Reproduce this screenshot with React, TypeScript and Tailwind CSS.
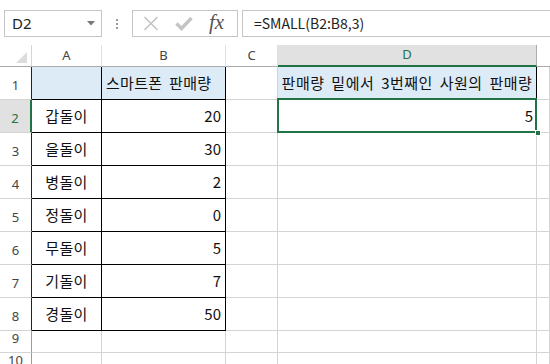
import React from "react";

const KR = "font-['Malgun_Gothic','Noto_Sans_CJK_KR',sans-serif]";
const UI = "font-['Segoe_UI','Noto_Sans',sans-serif]";

const people = [
  { name: "갑돌이", value: 20 },
  { name: "을돌이", value: 30 },
  { name: "병돌이", value: 2 },
  { name: "정돌이", value: 0 },
  { name: "무돌이", value: 5 },
  { name: "기돌이", value: 7 },
  { name: "경돌이", value: 50 },
];

function RowHeader({ n, active, inTable }: { n: number; active?: boolean; inTable?: boolean }) {
  return (
    <div
      className={`w-[32px] shrink-0 flex items-end justify-center pb-[4px] border-b border-[#d4d4d4] text-[13px] ${UI} ${
        active
          ? "bg-[#e1e1e1] text-[#217346] border-r-2 border-r-[#217346]"
          : inTable
          ? "bg-white text-[#444] border-r border-r-[#222]"
          : "bg-white text-[#444] border-r border-r-[#9b9b9b]"
      }`}
    >
      {n}
    </div>
  );
}

function FormulaBar() {
  return (
    <div className="h-[45px] flex items-start pt-[10px] bg-white">
      {/* name box */}
      <div className="ml-[4px] w-[98px] h-[27px] border border-[#c6c6c6] flex items-center justify-between pl-[7px] pr-[6px]">
        <span className={`text-[15px] text-[#222] ${UI}`}>D2</span>
        <svg width="8" height="5" viewBox="0 0 8 5">
          <path d="M0 0 L8 0 L4 4.5 Z" fill="#777" />
        </svg>
      </div>
      {/* grip dots */}
      <div className="w-[30px] h-[27px] flex flex-col items-center justify-center gap-[2px]">
        <div className="w-[2px] h-[2px] bg-[#9a9a9a]" />
        <div className="w-[2px] h-[2px] bg-[#9a9a9a]" />
        <div className="w-[2px] h-[2px] bg-[#9a9a9a]" />
      </div>
      {/* cancel / enter / fx */}
      <div className="w-[106px] h-[27px] border border-[#c6c6c6] flex items-center pl-[10px] gap-[16px]">
        <svg width="16" height="15" viewBox="0 0 16 15">
          <path d="M1.5 1 L14.5 14 M14.5 1 L1.5 14" stroke="#c4c4c4" strokeWidth="1.6" fill="none" />
        </svg>
        <svg width="18" height="15" viewBox="0 0 18 15">
          <path d="M1.5 7.5 L6.5 12.5 L16.5 2" stroke="#c4c4c4" strokeWidth="3.4" fill="none" />
        </svg>
        <span className="font-['Liberation_Serif',serif] italic text-[21px] leading-none text-[#555] -mt-[2px]">
          fx
        </span>
      </div>
      <div className="ml-[4px] flex-1 h-[27px] border border-r-0 border-[#c6c6c6] flex items-center pl-[11px]">
        <span className={`text-[14px] text-[#222] ${KR}`}>=SMALL(B2:B8,3)</span>
      </div>
    </div>
  );
}

function ColumnHeaders() {
  const cols = [
    { label: "A", w: "w-[70px]" },
    { label: "B", w: "w-[124px]" },
    { label: "C", w: "w-[52px]" },
  ];
  return (
    <div className={`h-[22px] flex text-[13px] ${UI}`}>
      <div className="w-[32px] shrink-0 border-r border-b border-r-[#d4d4d4] border-b-[#ababab] relative">
        <svg className="absolute right-[4px] bottom-[3px]" width="11" height="11" viewBox="0 0 11 11">
          <path d="M11 0 L11 11 L0 11 Z" fill="#dcdcdc" />
        </svg>
      </div>
      {cols.map((c) => (
        <div
          key={c.label}
          className={`${c.w} shrink-0 flex items-center justify-center border-r border-b border-r-[#e1e1e1] border-b-[#ababab] text-[#444]`}
        >
          {c.label}
        </div>
      ))}
      <div className="w-[259px] shrink-0 flex items-center justify-center bg-[#e1e1e1] border-r border-r-[#ababab] border-b-2 border-b-[#217346] text-[#217346]">
        D
      </div>
      <div className="flex-1 border-b border-b-[#ababab]" />
    </div>
  );
}

const grid = "border-r border-b border-[#d4d4d4]";

export default function App() {
  return (
    <div className={`w-[550px] h-[364px] overflow-hidden bg-white ${KR}`}>
      <FormulaBar />
      <ColumnHeaders />

      {/* row 1 */}
      <div className="h-[33px] flex text-[15px] text-[#111]">
        <RowHeader n={1} inTable />
        <div className="w-[70px] shrink-0 bg-[#ddebf7] border-r border-b border-black" />
        <div className="w-[124px] shrink-0 bg-[#ddebf7] border-r border-b border-black flex items-center pl-[4px] [word-spacing:3px] tracking-[0.3px]">
          스마트폰 판매량
        </div>
        <div className={`w-[52px] shrink-0 ${grid}`} />
        <div className="w-[259px] shrink-0 bg-[#ddebf7] border-r border-b border-black flex items-center justify-center [word-spacing:3px] tracking-[0.5px]">
          판매량 밑에서 3번째인 사원의 판매량
        </div>
        <div className={`flex-1 ${grid}`} />
      </div>

      {/* rows 2-8 */}
      {people.map((p, i) => (
        <div key={p.name} className="h-[33px] flex text-[15px] text-[#111]">
          <RowHeader n={i + 2} active={i === 0} inTable />
          <div className="w-[70px] shrink-0 border-r border-b border-black flex items-center justify-center tracking-[0.3px]">
            {p.name}
          </div>
          <div className="w-[124px] shrink-0 border-r border-b border-black flex items-center justify-end pr-[4px]">
            {p.value}
          </div>
          <div className={`w-[52px] shrink-0 ${grid}`} />
          {i === 0 ? (
            <div className="w-[259px] shrink-0 relative flex items-center justify-end pr-[4px] border-b border-[#d4d4d4]">
              5
              <div className="absolute -left-[1px] -top-[2px] w-[260px] h-[35px] border-2 border-[#217346]" />
              <div className="absolute -right-[4px] -bottom-[4px] w-[6px] h-[6px] bg-[#217346] border border-white" />
            </div>
          ) : (
            <div className={`w-[259px] shrink-0 ${grid}`} />
          )}
          <div className={`flex-1 ${grid}`} />
        </div>
      ))}

      {/* rows 9-10 */}
      {[9, 10].map((n) => (
        <div key={n} className="h-[22px] flex">
          <RowHeader n={n} />
          <div className={`w-[70px] shrink-0 ${grid}`} />
          <div className={`w-[124px] shrink-0 ${grid}`} />
          <div className={`w-[52px] shrink-0 ${grid}`} />
          <div className={`w-[259px] shrink-0 ${grid}`} />
          <div className={`flex-1 ${grid}`} />
        </div>
      ))}
    </div>
  );
}
